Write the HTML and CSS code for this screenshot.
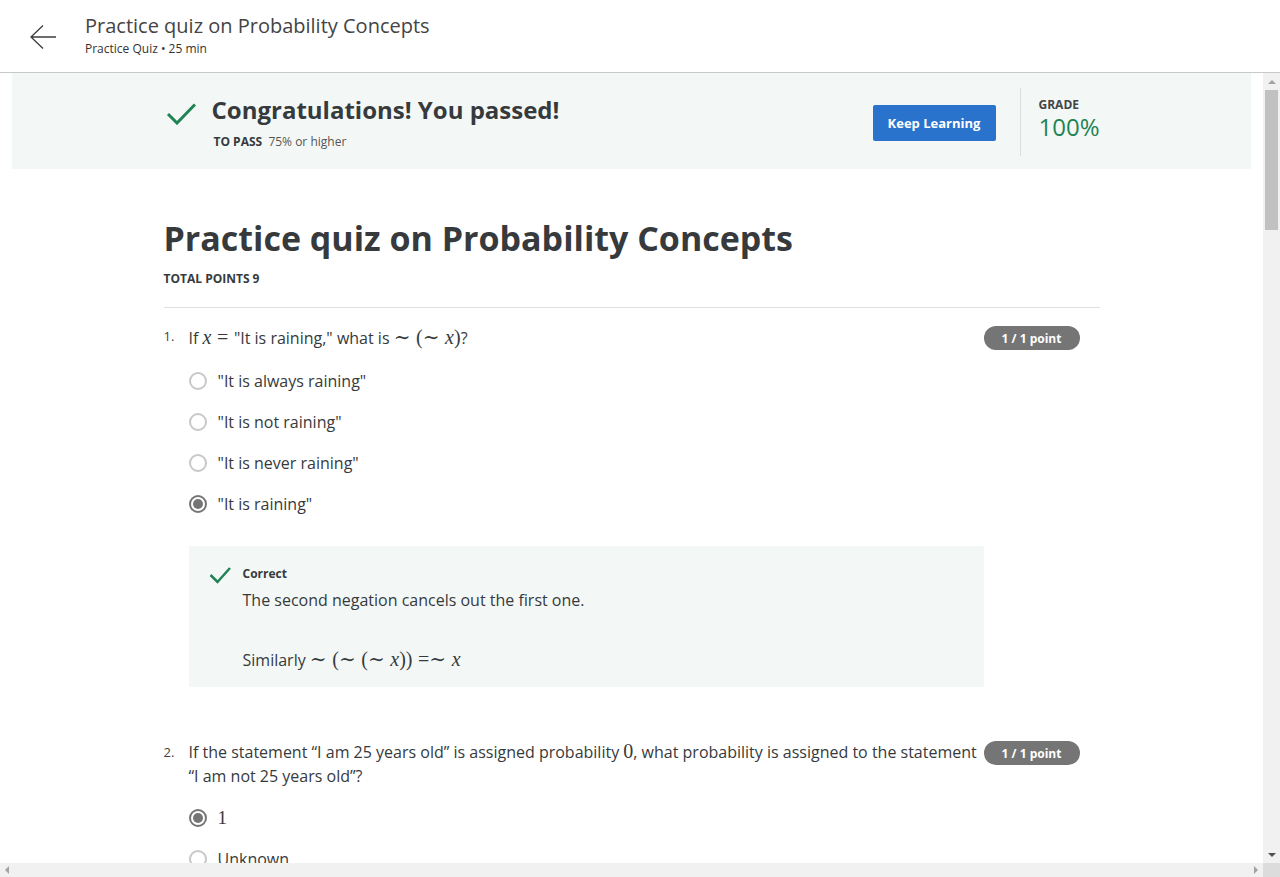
FILE: index.html
```html
<!DOCTYPE html>
<html lang="en">
<head>
<meta charset="utf-8">
<title>Practice quiz on Probability Concepts</title>
<link rel="stylesheet" href="styles.css">
</head>
<body>
<div class="app">
  <header class="topbar">
    <button class="back" aria-label="Back">
      <svg width="26" height="24" viewBox="0 0 26 24"><path d="M1 12 H26 M13 0.5 L1 12 L13 23.5" fill="none" stroke="#3c3c3c" stroke-width="1.3"/></svg>
    </button>
    <div class="head-titles">
      <div class="head-title">Practice quiz on Probability Concepts</div>
      <div class="head-sub">Practice Quiz • 25 min</div>
    </div>
  </header>
  <div class="viewport">
    <div class="scroll-row">
      <main class="content">
        <section class="banner">
          <div class="banner-inner">
            <div class="pass">
              <svg class="pass-check" width="30" height="22" viewBox="0 0 30 22"><path d="M2 11 L11 20 L29 1.5" fill="none" stroke="#1f8354" stroke-width="3"/></svg>
              <div>
                <h1 class="pass-title">Congratulations! You passed!</h1>
                <div class="to-pass"><b>TO PASS</b>&nbsp; 75% or higher</div>
              </div>
            </div>
            <button class="keep">Keep Learning</button>
            <div class="grade">
              <div class="grade-label">GRADE</div>
              <div class="grade-val">100%</div>
            </div>
          </div>
        </section>

        <div class="quiz">
          <div class="quiz-head">
            <h2 class="quiz-title">Practice quiz on Probability Concepts</h2>
            <div class="total">TOTAL POINTS 9</div>
          </div>

          <div class="question q1">
            <div class="q-num">1.</div>
            <div class="q-body">
              <div class="prompt prompt-tall">If <span class="m"><i>x</i><span class="rel">=</span></span>"It is raining," what is <span class="m"><span class="rel-r">∼</span>(<span class="rel-r">∼</span><i>x</i>)</span>?</div>
              <div class="options">
                <div class="option"><span class="radio"></span><span class="opt-label">"It is always raining"</span></div>
                <div class="option"><span class="radio"></span><span class="opt-label">"It is not raining"</span></div>
                <div class="option"><span class="radio"></span><span class="opt-label">"It is never raining"</span></div>
                <div class="option"><span class="radio checked"></span><span class="opt-label">"It is raining"</span></div>
              </div>
              <div class="feedback">
                <svg class="fb-check" width="22" height="17" viewBox="0 0 22 17"><path d="M1.5 8 L8.5 15 L21 1" fill="none" stroke="#1f8354" stroke-width="2.5"/></svg>
                <div class="fb-text">
                  <div class="fb-title">Correct</div>
                  <p class="fb-p">The second negation cancels out the first one.</p>
                  <p class="fb-p fb-gap">Similarly <span class="m"><span class="rel-r">∼</span>(<span class="rel-r">∼</span>(<span class="rel-r">∼</span><i>x</i>))<span class="rel-l">=</span><span class="rel-r">∼</span><i>x</i></span></p>
                </div>
              </div>
            </div>
            <div class="badge">1 / 1 point</div>
          </div>

          <div class="question q2">
            <div class="q-num">2.</div>
            <div class="q-body">
              <div class="prompt">If the statement “I am 25 years old” is assigned probability <span class="m">0</span>, what probability is assigned to the statement “I am not 25 years old”?</div>
              <div class="options">
                <div class="option"><span class="radio checked"></span><span class="opt-label m">1</span></div>
                <div class="option"><span class="radio"></span><span class="opt-label">Unknown</span></div>
              </div>
            </div>
            <div class="badge">1 / 1 point</div>
          </div>
        </div>
      </main>
      <div class="vscroll">
        <div class="sb-btn"><span class="tri-up"></span></div>
        <div class="v-thumb"></div>
        <div class="sb-fill"></div>
        <div class="sb-btn"><span class="tri-down"></span></div>
      </div>
    </div>
    <div class="hscroll">
      <div class="sb-hbtn"><span class="tri-left"></span></div>
      <div class="sb-fill"></div>
      <div class="sb-hbtn"><span class="tri-right"></span></div>
      <div class="sb-corner"></div>
    </div>
  </div>
</div>
</body>
</html>
```
FILE: styles.css
```css
* { box-sizing: border-box; }
html, body { margin: 0; height: 100%; }
body {
  font-family: "Open Sans", "Liberation Sans", sans-serif;
  color: #373a3c;
  background: #fff;
  overflow: hidden;
}
.app { display: flex; flex-direction: column; height: 877px; }

/* top bar */
.topbar {
  height: 73px;
  flex-shrink: 0;
  border-bottom: 1px solid #c9c9c9;
  display: flex;
  align-items: flex-start;
}
.back {
  width: 26px; height: 24px;
  margin: 25px 0 0 30px;
  padding: 0; border: 0; background: none;
  display: block;
}
.back svg { display: block; }
.head-titles { margin-left: 29px; padding-top: 13px; }
.head-title { font-size: 20px; line-height: 26px; color: #444; }
.head-sub { font-size: 12px; line-height: 16px; margin-top: 2px; color: #333; }

/* viewport + scrollbars */
.viewport { flex: 1; min-height: 0; display: flex; flex-direction: column; }
.scroll-row { flex: 1; min-height: 0; display: flex; }
.content { flex: 1; min-width: 0; overflow: hidden; padding: 0 12px; }
.vscroll {
  width: 17px; flex-shrink: 0;
  background: #f1f1f1;
  display: flex; flex-direction: column; align-items: center;
}
.sb-btn { height: 17px; width: 17px; display: flex; align-items: center; justify-content: center; }
.v-thumb { width: 13px; height: 140px; background: #c1c1c1; }
.sb-fill { flex: 1; }
.hscroll { height: 14px; flex-shrink: 0; background: #f1f1f1; display: flex; }
.sb-hbtn { width: 14px; height: 14px; display: flex; align-items: center; justify-content: center; }
.sb-corner { width: 17px; background: #dcdcdc; }
.tri-up { width: 0; height: 0; border-left: 4px solid transparent; border-right: 4px solid transparent; border-bottom: 4px solid #a3a3a3; }
.tri-down { width: 0; height: 0; border-left: 4px solid transparent; border-right: 4px solid transparent; border-top: 4px solid #505050; }
.tri-left { width: 0; height: 0; border-top: 4px solid transparent; border-bottom: 4px solid transparent; border-right: 4px solid #a3a3a3; }
.tri-right { width: 0; height: 0; border-top: 4px solid transparent; border-bottom: 4px solid transparent; border-left: 4px solid #a3a3a3; }

/* banner */
.banner { background: #f3f8f6; height: 96px; }
.banner-inner {
  width: 936px; height: 100%; margin: 0 auto;
  padding-top: 2px;
  display: flex; align-items: center;
}
.pass { display: flex; align-items: flex-start; }
.pass-check { display: block; margin: 9px 16px 0 2px; flex-shrink: 0; }
.pass-title { margin: 0; font-size: 24px; line-height: 32px; font-weight: 700; color: #373a3c; }
.to-pass { font-size: 12px; line-height: 16px; margin: 8px 0 0 2px; color: #555; }
.to-pass b { color: #373a3c; }
.keep {
  margin: 2px 0 0 auto;
  height: 36px; width: 123px; padding: 0;
  border: 0; border-radius: 2px;
  background: #2a73cc; color: #fff;
  font-family: inherit; font-size: 13px; font-weight: 700;
}
.grade {
  width: 80px; height: 68px; margin-left: 24px;
  border-left: 1px solid #dedede;
  padding: 10px 0 0 18px;
}
.grade-label { font-size: 12px; line-height: 14px; font-weight: 700; color: #444; }
.grade-val { font-size: 24px; line-height: 28px; margin-top: 1px; color: #1f8354; }

/* quiz */
.quiz { width: 936px; margin: 0 auto; padding-top: 49px; }
.quiz-head { border-bottom: 1px solid #e1e1e1; padding-bottom: 20px; }
.quiz-title { margin: 0; font-size: 34px; line-height: 40px; font-weight: 700; color: #373a3c; }
.total { margin-top: 13px; font-size: 12px; line-height: 16px; font-weight: 700; color: #373a3c; }

.question { display: flex; align-items: flex-start; }
.q1 { padding-top: 16px; }
.q2 { margin-top: 53px; }
.q-num { width: 25px; flex-shrink: 0; font-size: 13px; line-height: 24px; color: #444; }
.q-body { flex: 1; min-width: 0; }
.prompt { font-size: 16px; line-height: 24px; color: #373a3c; }
.prompt-tall { line-height: 28px; }
.badge {
  width: 96px; height: 24px; flex-shrink: 0;
  margin: 2px 20px 0 0;
  border-radius: 12px;
  background: #757575; color: #fff;
  font-size: 12px; font-weight: 700;
  display: flex; align-items: center; justify-content: center;
}
.q1 .badge { margin-top: 2px; }
.q2 .badge { margin-top: 1px; }

.m { font-family: "Liberation Serif", "DejaVu Serif", serif; font-size: 20px; line-height: 1; }
.m i { font-style: italic; }
.rel { margin: 0 0.28em; }
.rel-r { margin-right: 0.28em; }
.rel-l { margin-left: 0.28em; }

.options { margin-top: 8px; }
.q2 .options { margin-top: 9px; }
.option { height: 41px; display: flex; align-items: center; }
.radio {
  width: 18px; height: 18px; border-radius: 50%;
  border: 2px solid #c8c8c8; background: #fff;
  flex-shrink: 0;
  display: flex; align-items: center; justify-content: center;
}
.radio.checked { border: 2px solid #757575; }
.radio.checked::after {
  content: ""; width: 10px; height: 10px; border-radius: 50%; background: #757575;
}
.opt-label { margin-left: 11px; font-size: 16px; color: #373a3c; }
.opt-label.m { font-size: 19px; }

.feedback {
  margin-top: 22px;
  background: #f3f8f6;
  padding: 20px 20px 15px 20px;
  display: flex; align-items: flex-start;
}
.fb-check { display: block; flex-shrink: 0; margin: 1px 12px 0 0; }
.fb-title { font-size: 12px; line-height: 16px; font-weight: 700; color: #373a3c; }
.fb-p { margin: 6px 0 0; font-size: 16px; line-height: 24px; color: #373a3c; }
.fb-gap { margin-top: 36px; }
```
